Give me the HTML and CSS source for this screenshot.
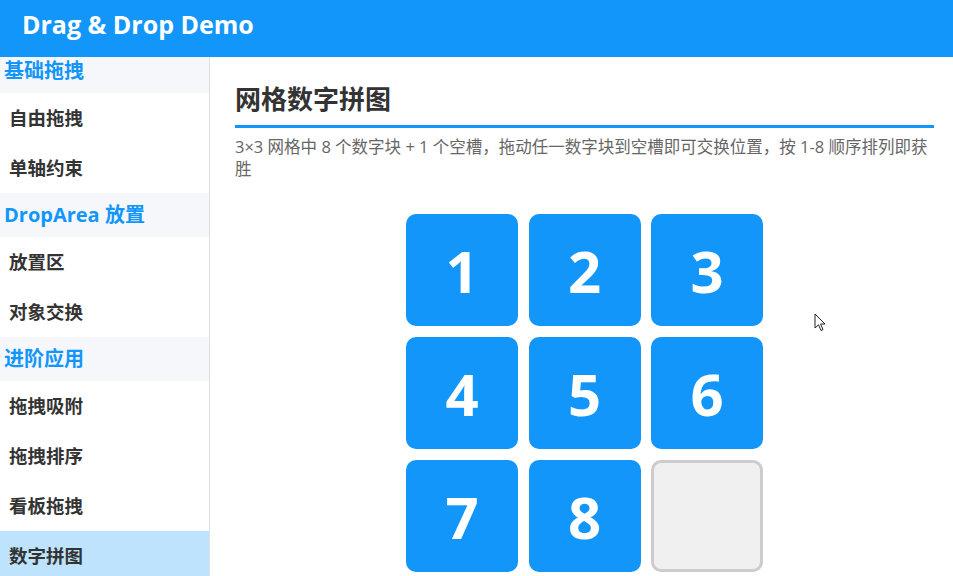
FILE: index.html
```html
<!DOCTYPE html>
<html lang="zh">
<head>
<meta charset="utf-8">
<title>Drag & Drop Demo</title>
<link rel="stylesheet" href="styles.css">
</head>
<body>
<header class="topbar"><h1 class="app-title">Drag &amp; Drop Demo</h1></header>
<div class="layout">
  <nav class="sidebar">
    <div class="nav-inner">
      <div class="nav-section">基础拖拽</div>
      <div class="nav-item">自由拖拽</div>
      <div class="nav-item">单轴约束</div>
      <div class="nav-section">DropArea 放置</div>
      <div class="nav-item">放置区</div>
      <div class="nav-item">对象交换</div>
      <div class="nav-section">进阶应用</div>
      <div class="nav-item">拖拽吸附</div>
      <div class="nav-item">拖拽排序</div>
      <div class="nav-item">看板拖拽</div>
      <div class="nav-item active">数字拼图</div>
    </div>
  </nav>
  <main class="content">
    <h2 class="page-title">网格数字拼图</h2>
    <p class="desc">3×3 网格中 8 个数字块 + 1 个空槽，拖动任一数字块到空槽即可交换位置，按 1-8 顺序排列即获胜</p>
    <div class="board">
      <div class="tile">1</div>
      <div class="tile">2</div>
      <div class="tile">3</div>
      <div class="tile">4</div>
      <div class="tile">5</div>
      <div class="tile">6</div>
      <div class="tile">7</div>
      <div class="tile">8</div>
      <div class="tile empty"></div>
    </div>
  </main>
</div>
<svg class="cursor" width="13" height="20" viewBox="0 0 13 20"><path d="M1 1 L1 15 L4.5 11.8 L7 17.5 L9 16.6 L6.6 11 L11 11 Z" fill="#fff" stroke="#222" stroke-width="1" stroke-linejoin="round"/></svg>
</body>
</html>
```

FILE: styles.css
```css
* { box-sizing: border-box; }
html, body { margin: 0; padding: 0; }
body {
  width: 953px;
  height: 576px;
  overflow: hidden;
  font-family: "Open Sans", "Noto Sans CJK SC", sans-serif;
  background: #fff;
  color: #333;
  position: relative;
}
.topbar {
  height: 57px;
  background: #1296fa;
  padding: 0 22px;
  display: flex;
  align-items: flex-start;
}
.app-title {
  margin: 0;
  padding-top: 8px;
  font-size: 25px;
  line-height: 32px;
  font-weight: 700;
  color: #fff;
}
.layout {
  display: flex;
  height: 519px;
}
.sidebar {
  width: 210px;
  flex: none;
  border-right: 1px solid #dcdfe6;
  overflow: hidden;
}
.nav-inner { margin-top: -8px; }
.nav-section {
  height: 44px;
  line-height: 44px;
  padding-left: 4px;
  background: #f5f7fa;
  color: #1296fa;
  font-size: 20px;
  font-weight: 700;
}
.nav-item {
  height: 50px;
  line-height: 50px;
  padding-left: 9px;
  font-size: 18.5px;
  font-weight: 700;
  color: #333;
}
.nav-item.active { background: #bee3fc; }
.content {
  flex: 1;
  padding: 24px 19px 0 25px;
}
.page-title {
  margin: 0;
  font-size: 26px;
  line-height: 36px;
  font-weight: 700;
  color: #333;
  padding-bottom: 8px;
  border-bottom: 3px solid #1296fa;
}
.desc {
  margin: 8px 0 0;
  font-size: 16.5px;
  line-height: 22px;
  color: #666;
}
.board {
  margin: 34px auto 0;
  width: 357px;
  display: grid;
  grid-template-columns: repeat(3, 112px);
  grid-auto-rows: 112px;
  gap: 11px 10.5px;
}
.tile {
  background: #1296fa;
  border-radius: 10px;
  color: #fff;
  font-size: 58px;
  font-weight: 700;
  display: flex;
  align-items: center;
  justify-content: center;
}
.tile.empty {
  background: #f0f0f0;
  border: 3px solid #ccc;
}
.cursor {
  position: absolute;
  left: 814px;
  top: 313px;
}
```
